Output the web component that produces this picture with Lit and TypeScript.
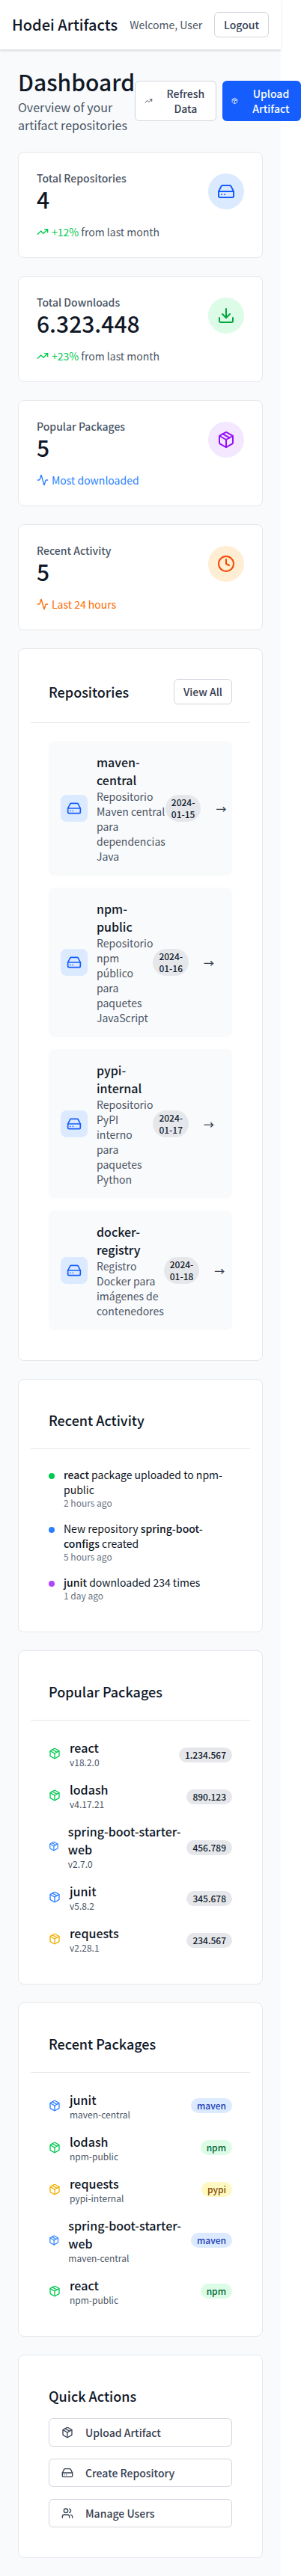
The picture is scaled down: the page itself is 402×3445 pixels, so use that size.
import { LitElement, html, svg, css } from "lit";
import { customElement, property } from "lit/decorators.js";

const ICONS: Record<string, unknown> = {
  drive: svg`<path d="M22 12H2"/><path d="M5.45 5.11 2 12v6a2 2 0 0 0 2 2h16a2 2 0 0 0 2-2v-6l-3.45-6.89A2 2 0 0 0 16.76 4H7.24a2 2 0 0 0-1.79 1.11z"/><path d="M6 16h.01"/><path d="M10 16h.01"/>`,
  package: svg`<path d="M11 21.73a2 2 0 0 0 2 0l7-4A2 2 0 0 0 21 16V8a2 2 0 0 0-1-1.73l-7-4a2 2 0 0 0-2 0l-7 4A2 2 0 0 0 3 8v8a2 2 0 0 0 1 1.73z"/><path d="M12 22V12"/><path d="M3.29 7 12 12l8.71-5"/><path d="m7.5 4.27 9 5.15"/>`,
  trend: svg`<path d="M16 7h6v6"/><path d="m22 7-8.5 8.5-5-5L2 17"/>`,
  activity: svg`<path d="M22 12h-2.48a2 2 0 0 0-1.93 1.46l-2.35 8.36a.25.25 0 0 1-.48 0L9.24 2.18a.25.25 0 0 0-.48 0l-2.35 8.36A2 2 0 0 1 4.49 12H2"/>`,
  download: svg`<path d="M12 15V3"/><path d="M21 15v4a2 2 0 0 1-2 2H5a2 2 0 0 1-2-2v-4"/><path d="m7 10 5 5 5-5"/>`,
  clock: svg`<circle cx="12" cy="12" r="10"/><path d="M12 6v6l4 2"/>`,
  users: svg`<path d="M16 21v-2a4 4 0 0 0-4-4H6a4 4 0 0 0-4 4v2"/><path d="M16 3.128a4 4 0 0 1 0 7.744"/><path d="M22 21v-2a4 4 0 0 0-3-3.87"/><circle cx="9" cy="7" r="4"/>`,
};

const icon = (name: string, cls: string) => html`<svg
  class="icon ${cls}" viewBox="0 0 24 24" fill="none" stroke="currentColor"
  stroke-width="2" stroke-linecap="round" stroke-linejoin="round">${ICONS[name]}</svg>`;

const base = css`
  * { box-sizing: border-box; margin: 0; }
  .icon { display: block; width: 16px; height: 16px; }
  .icon.md { width: 20px; height: 20px; }
  .icon.lg { width: 24px; height: 24px; }
  .btn {
    display: inline-flex; align-items: center; justify-content: center; gap: 8px;
    font: 500 14px/20px var(--font); color: #364153; background: #fff;
    border: 1px solid #d1d5dc; border-radius: 6px; padding: 6px 12px; text-align: center;
  }
  .btn .icon { margin-right: 8px; }
  .btn.primary { background: #155dfc; border: 0; color: #fff; }
  .btn.ghost { background: transparent; border: 0; }
  .btn.wide { width: 100%; justify-content: flex-start; padding: 8px 16px; }
  .badge {
    display: inline-flex; align-items: center; border-radius: 18px; padding: 2px 8px;
    font-size: 12px; line-height: 16px; font-weight: 500; background: #e5e7eb; color: #101828;
  }
  .badge.maven { background: #dbeafe; color: #193cb8; }
  .badge.npm { background: #dcfce7; color: #016630; }
  .badge.pypi { background: #fef9c2; color: #894b00; }
  .green { color: #00c950; }
  .blue { color: #2b7fff; }
  .orange { color: #ff6900; }
  .yellow { color: #f0b100; }
`;

@customElement("stat-card")
class StatCard extends LitElement {
  @property() label = "";
  @property() value = "";
  @property() glyph = "";
  @property() tone = "";
  @property() trendGlyph = "";
  @property() trendTone = "";
  @property() trend = "";
  @property() note = "";

  static styles = [base, css`
    :host { display: block; }
    .card { background: #fff; border: 1px solid #e5e7eb; border-radius: 8px; padding: 24px; }
    .top { display: flex; align-items: center; justify-content: space-between; }
    .label { font-size: 14px; line-height: 20px; font-weight: 500; color: #4a5565; }
    .value { font-size: 30px; line-height: 36px; font-weight: 500; color: #101828; }
    .disc { padding: 12px; border-radius: 50%; }
    .disc.t-blue { background: #dbeafe; color: #155dfc; }
    .disc.t-green { background: #dcfce7; color: #00a63e; }
    .disc.t-purple { background: #f3e8ff; color: #9810fa; }
    .disc.t-orange { background: #ffedd4; color: #f54900; }
    .trend { display: flex; align-items: center; gap: 4px; margin-top: 16px; font-size: 14px; line-height: 20px; }
    .note { color: #4a5565; }
  `];

  render() {
    return html`
      <div class="card">
        <div class="top">
          <div>
            <p class="label">${this.label}</p>
            <p class="value">${this.value}</p>
          </div>
          <div class="disc t-${this.tone}">${icon(this.glyph, "lg")}</div>
        </div>
        <div class="trend ${this.trendTone}">
          ${icon(this.trendGlyph, "")}
          <span>${this.trend}${this.note ? html` <span class="note">${this.note}</span>` : ""}</span>
        </div>
      </div>`;
  }
}

@customElement("panel-card")
class PanelCard extends LitElement {
  @property() heading = "";

  static styles = [base, css`
    :host { display: block; }
    .card { background: #fff; border: 1px solid #e5e7eb; border-radius: 8px; padding: 16px; }
    .head { display: flex; align-items: center; justify-content: space-between; padding: 24px; border-bottom: 1px solid #e5e7eb; }
    h2 { font-size: 18px; line-height: 28px; font-weight: 500; color: #101828; }
    .body { padding: 24px; }
  `];

  render() {
    return html`
      <div class="card">
        <div class="head"><h2>${this.heading}</h2><slot name="action"></slot></div>
        <div class="body"><slot></slot></div>
      </div>`;
  }
}

const STATS = [
  ["Total Repositories", "4", "drive", "blue", "trend", "green", "+12%", "from last month"],
  ["Total Downloads", "6.323.448", "download", "green", "trend", "green", "+23%", "from last month"],
  ["Popular Packages", "5", "package", "purple", "activity", "blue", "Most downloaded", ""],
  ["Recent Activity", "5", "clock", "orange", "activity", "orange", "Last 24 hours", ""],
];

const REPOS = [
  ["maven-central", "Repositorio Maven central para dependencias Java", "2024-01-15"],
  ["npm-public", "Repositorio npm público para paquetes JavaScript", "2024-01-16"],
  ["pypi-internal", "Repositorio PyPI interno para paquetes Python", "2024-01-17"],
  ["docker-registry", "Registro Docker para imágenes de contenedores", "2024-01-18"],
];

const ACTIVITY = [
  ["g", html`<b>react</b> package uploaded to npm-public`, "2 hours ago"],
  ["b", html`New repository <b>spring-boot-configs</b> created`, "5 hours ago"],
  ["p", html`<b>junit</b> downloaded 234 times`, "1 day ago"],
];

const POPULAR = [
  ["react", "v18.2.0", "1.234.567", "green"],
  ["lodash", "v4.17.21", "890.123", "green"],
  ["spring-boot-starter-web", "v2.7.0", "456.789", "blue"],
  ["junit", "v5.8.2", "345.678", "blue"],
  ["requests", "v2.28.1", "234.567", "yellow"],
];

const RECENT = [
  ["junit", "maven-central", "maven", "blue"],
  ["lodash", "npm-public", "npm", "green"],
  ["requests", "pypi-internal", "pypi", "yellow"],
  ["spring-boot-starter-web", "maven-central", "maven", "blue"],
  ["react", "npm-public", "npm", "green"],
];

@customElement("app-root")
class AppRoot extends LitElement {
  static styles = [base, css`
    :host {
      --font: "Noto Sans CJK JP", "Noto Sans CJK SC", sans-serif;
      display: block; width: 375px; background: #f9fafb; color: #101828;
      font-family: var(--font); font-size: 16px; line-height: 24px;
    }
    .bar {
      display: flex; align-items: center; justify-content: space-between; padding: 16px;
      background: #fff; border-bottom: 1px solid #e5e7eb;
      box-shadow: 0 1px 3px rgba(0,0,0,.1), 0 1px 2px -1px rgba(0,0,0,.1);
    }
    .brand { font-size: 20px; line-height: 28px; font-weight: 500; }
    .user { display: flex; align-items: center; gap: 16px; font-size: 14px; line-height: 20px; color: #4a5565; }
    main { display: flex; flex-direction: column; gap: 24px; padding: 24px; }
    .intro { display: flex; align-items: center; justify-content: space-between; }
    h1 { font-size: 30px; line-height: 36px; font-weight: 500; }
    .intro p { color: #4a5565; margin-top: 4px; }
    .actions { display: flex; gap: 8px; }
    .stack { display: flex; flex-direction: column; gap: 16px; }
    .row { display: flex; align-items: center; justify-content: space-between; }
    .left { display: flex; align-items: center; gap: 12px; }
    .name { font-weight: 500; }
    .repo { background: #f9fafb; border-radius: 8px; padding: 16px; }
    .repo-icon { padding: 8px; border-radius: 8px; background: #dbeafe; color: #155dfc; }
    .desc { font-size: 14px; line-height: 20px; color: #4a5565; }
    .right { display: flex; align-items: center; gap: 8px; }
    .event { display: flex; align-items: flex-start; gap: 12px; }
    .dot { flex: none; width: 8px; height: 8px; border-radius: 50%; margin-top: 8px; }
    .dot.g { background: #00c950; }
    .dot.b { background: #2b7fff; }
    .dot.p { background: #ad46ff; }
    .what { font-size: 14px; line-height: 20px; }
    .what b { font-weight: 500; }
    .when { font-size: 12px; line-height: 16px; color: #6a7282; }
    .meta { font-size: 12px; line-height: 16px; color: #4a5565; }
    .quick { background: #fff; border: 1px solid #e5e7eb; border-radius: 8px; padding: 40px; }
    .quick h3 { font-size: 18px; line-height: 28px; font-weight: 500; margin-bottom: 16px; }
  `];

  private packageRow(name: string, meta: string, tone: string, badge: unknown) {
    return html`
      <div class="row">
        <div class="left">
          ${icon("package", tone)}
          <div><p class="name">${name}</p><p class="meta">${meta}</p></div>
        </div>
        ${badge}
      </div>`;
  }

  render() {
    return html`
      <header class="bar">
        <div class="brand">Hodei Artifacts</div>
        <div class="user"><span>Welcome, User</span><button class="btn">Logout</button></div>
      </header>
      <main>
        <div class="intro">
          <div><h1>Dashboard</h1><p>Overview of your artifact repositories</p></div>
          <div class="actions">
            <button class="btn">${icon("trend", "")}<span>Refresh Data</span></button>
            <button class="btn primary">${icon("package", "")}<span>Upload Artifact</span></button>
          </div>
        </div>
        ${STATS.map(([label, value, glyph, tone, tg, tt, trend, note]) => html`
          <stat-card .label=${label} .value=${value} .glyph=${glyph} .tone=${tone}
            .trendGlyph=${tg} .trendTone=${tt} .trend=${trend} .note=${note}></stat-card>`)}
        <panel-card heading="Repositories">
          <button slot="action" class="btn">View All</button>
          <div class="stack">
            ${REPOS.map(([name, desc, date]) => html`
              <div class="row repo">
                <div class="left">
                  <div class="repo-icon">${icon("drive", "md")}</div>
                  <div><p class="name">${name}</p><p class="desc">${desc}</p></div>
                </div>
                <div class="right">
                  <span class="badge">${date}</span>
                  <button class="btn ghost">→</button>
                </div>
              </div>`)}
          </div>
        </panel-card>
        <panel-card heading="Recent Activity">
          <div class="stack">
            ${ACTIVITY.map(([tone, what, when]) => html`
              <div class="event">
                <span class="dot ${tone}"></span>
                <div><p class="what">${what}</p><p class="when">${when}</p></div>
              </div>`)}
          </div>
        </panel-card>
        <panel-card heading="Popular Packages">
          <div class="stack">
            ${POPULAR.map(([name, version, count, tone]) =>
              this.packageRow(name, version, tone, html`<div><span class="badge">${count}</span></div>`))}
          </div>
        </panel-card>
        <panel-card heading="Recent Packages">
          <div class="stack">
            ${RECENT.map(([name, repo, kind, tone]) =>
              this.packageRow(name, repo, tone, html`<span class="badge ${kind}">${kind}</span>`))}
          </div>
        </panel-card>
        <section class="quick">
          <h3>Quick Actions</h3>
          <div class="stack">
            <button class="btn wide">${icon("package", "")}<span>Upload Artifact</span></button>
            <button class="btn wide">${icon("drive", "")}<span>Create Repository</span></button>
            <button class="btn wide">${icon("users", "")}<span>Manage Users</span></button>
          </div>
        </section>
      </main>`;
  }
}
